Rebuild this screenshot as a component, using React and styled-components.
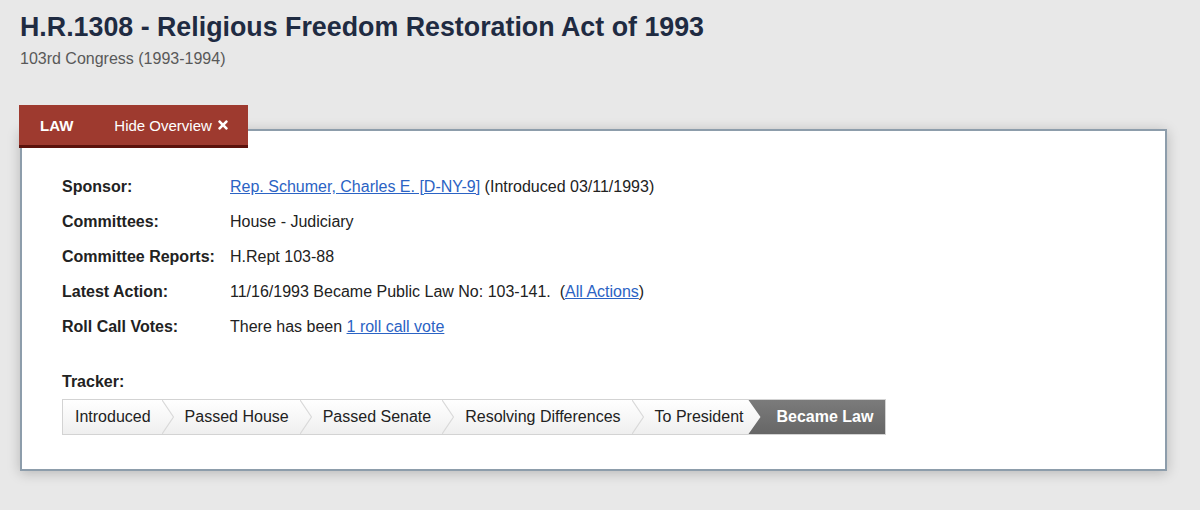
import React from 'react';
import styled, { createGlobalStyle } from 'styled-components';
import { FaTimes } from 'react-icons/fa';

const GlobalStyle = createGlobalStyle`
  html, body {
    margin: 0;
    background: #e8e8e8;
  }
  body {
    font-family: "Liberation Sans", Arial, Helvetica, sans-serif;
    color: #222;
  }
`;

const Page = styled.div`
  padding: 11px 33px 40px 20px;
`;

const Title = styled.h1`
  margin: 0 0 6px;
  font-size: 26.8px;
  line-height: 32px;
  font-weight: 700;
  color: #1f2b42;
`;

const Subtitle = styled.div`
  font-size: 16px;
  line-height: 20px;
  color: #595959;
`;

const Overview = styled.div`
  position: relative;
  margin-top: 60px;
  background: #fff;
  border: 2px solid #8d9dab;
  box-shadow: 0 2px 12px rgba(0, 0, 0, 0.22);
  padding: 38px 40px 34px;
`;

const Tab = styled.div`
  position: absolute;
  top: -26px;
  left: -3px;
  height: 40px;
  display: flex;
  align-items: center;
  gap: 41px;
  padding: 0 18px 0 21px;
  background: #9e3a2f;
  border-bottom: 3px solid #5b120c;
  color: #fff;
  font-size: 15px;
`;

const Status = styled.span`
  font-weight: 700;
`;

const HideToggle = styled.span`
  display: flex;
  align-items: center;
  gap: 4px;
  cursor: pointer;
`;

const Details = styled.div`
  display: grid;
  grid-template-columns: 168px 1fr;
  grid-auto-rows: 35px;
  align-items: center;
  font-size: 16px;
`;

const Label = styled.div`
  font-weight: 700;
`;

const Value = styled.div`
  color: #222;
`;

const A = styled.a`
  color: #2b63c4;
  text-decoration: underline;
`;

const TrackerLabel = styled.div`
  margin-top: 28px;
  font-size: 16px;
  line-height: 20px;
  font-weight: 700;
`;

const TrackerBar = styled.ol`
  display: inline-flex;
  margin: 7px 0 0;
  padding: 0;
  list-style: none;
  height: 34px;
  border: 1px solid #d3d3d3;
  background: linear-gradient(#ffffff, #efefef);
  font-size: 16px;
`;

const Step = styled.li`
  display: flex;
  align-items: center;
  padding: 0 ${(p) => (p.$beforeLast ? 5 : 11)}px 0 ${(p) => (p.$first ? 12 : 11)}px;
  white-space: nowrap;
`;

const FinalStep = styled.li`
  display: flex;
  align-items: center;
  padding: 0 12px 0 28px;
  background: linear-gradient(#7b7b7b, #666);
  color: #fff;
  font-weight: 700;
  white-space: nowrap;
  clip-path: polygon(0 0, 100% 0, 100% 100%, 0 100%, 12px 50%);
`;

const Chevron = () => (
  <svg width="12" height="34" viewBox="0 0 12 34" aria-hidden="true">
    <polyline points="0,0 11.5,17 0,34" fill="none" stroke="#d9d9d9" strokeWidth="1.2" />
  </svg>
);

const steps = ['Introduced', 'Passed House', 'Passed Senate', 'Resolving Differences', 'To President'];

const App = () => (
  <>
    <GlobalStyle />
    <Page>
      <Title>H.R.1308 - Religious Freedom Restoration Act of 1993</Title>
      <Subtitle>103rd Congress (1993-1994)</Subtitle>

      <Overview>
        <Tab>
          <Status>LAW</Status>
          <HideToggle>
            Hide Overview <FaTimes size={14} />
          </HideToggle>
        </Tab>

        <Details>
          <Label>Sponsor:</Label>
          <Value>
            <A href="#">Rep. Schumer, Charles E. [D-NY-9]</A> (Introduced 03/11/1993)
          </Value>
          <Label>Committees:</Label>
          <Value>House - Judiciary</Value>
          <Label>Committee Reports:</Label>
          <Value>H.Rept 103-88</Value>
          <Label>Latest Action:</Label>
          <Value>
            11/16/1993 Became Public Law No: 103-141.&nbsp; (<A href="#">All Actions</A>)
          </Value>
          <Label>Roll Call Votes:</Label>
          <Value>
            There has been <A href="#">1 roll call vote</A>
          </Value>
        </Details>

        <TrackerLabel>Tracker:</TrackerLabel>
        <TrackerBar>
          {steps.map((s, i) => (
            <React.Fragment key={s}>
              <Step $first={i === 0} $beforeLast={i === steps.length - 1}>
                {s}
              </Step>
              {i < steps.length - 1 && <Chevron />}
            </React.Fragment>
          ))}
          <FinalStep>Became Law</FinalStep>
        </TrackerBar>
      </Overview>
    </Page>
  </>
);

export default App;
